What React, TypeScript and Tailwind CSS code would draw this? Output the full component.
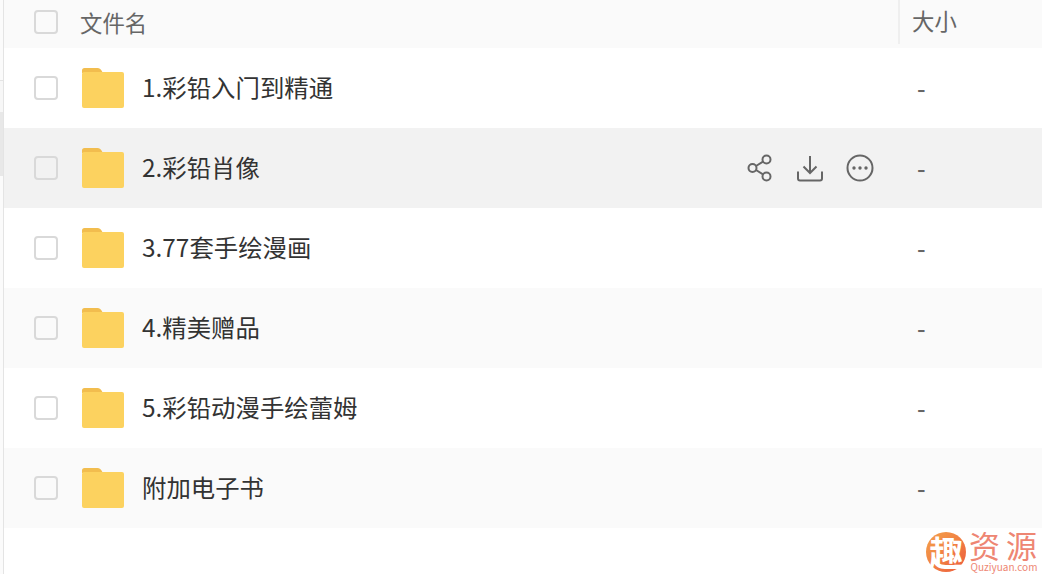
const files = [
  { name: '1.彩铅入门到精通', bg: 'bg-white' },
  { name: '2.彩铅肖像', bg: 'bg-[#f2f2f2]', hover: true },
  { name: '3.77套手绘漫画', bg: 'bg-white' },
  { name: '4.精美赠品', bg: 'bg-[#fafafa]' },
  { name: '5.彩铅动漫手绘蕾姆', bg: 'bg-white' },
  { name: '附加电子书', bg: 'bg-[#fafafa]' },
];

function Checkbox() {
  return <span className="block h-6 w-6 shrink-0 rounded-[4px] border-2 border-[#d9d9d9]" />;
}

function FolderIcon() {
  return (
    <svg width="44" height="42" viewBox="0 0 44 42" className="shrink-0">
      <path d="M1 3.5A2.5 2.5 0 0 1 3.5 1h13c2 0 3 1 4 2.5l1.500 2.500H1z" fill="#f2bd4e" />
      <path d="M1 7a2 2 0 0 1 2-2h38a2 2 0 0 1 2 2v32a2 2 0 0 1-2 2H3a2 2 0 0 1-2-2z" fill="#fcd25f" />
    </svg>
  );
}

function RowActions() {
  return (
    <div className="mr-6 flex items-center gap-[22px] text-[#666]">
      <svg width="28" height="28" viewBox="0 0 28 28" fill="none" stroke="currentColor" strokeWidth="2">
        <circle cx="6.500" cy="14" r="4" />
        <circle cx="20.500" cy="5.500" r="4" />
        <circle cx="20.500" cy="22.500" r="4" />
        <path d="M10 12l7-4.300M10 16l7 4.300" />
      </svg>
      <svg width="28" height="28" viewBox="0 0 28 28" fill="none" stroke="currentColor" strokeWidth="2">
        <path d="M14 2v17M7.500 12.500l6.500 6.500 6.500-6.500" />
        <path d="M2 17.500v7a2 2 0 0 0 2 2h20a2 2 0 0 0 2-2v-7" />
      </svg>
      <svg width="28" height="28" viewBox="0 0 28 28" fill="none" stroke="currentColor" strokeWidth="2">
        <circle cx="14" cy="14" r="12.500" />
        <circle cx="8" cy="14" r="1.700" fill="currentColor" stroke="none" />
        <circle cx="14" cy="14" r="1.700" fill="currentColor" stroke="none" />
        <circle cx="20" cy="14" r="1.700" fill="currentColor" stroke="none" />
      </svg>
    </div>
  );
}

function Watermark() {
  return (
    <div className="absolute bottom-0 left-[926px] flex items-center gap-[3px]">
      <div className="flex h-10 w-10 items-center justify-center rounded-full bg-gradient-to-br from-[#f3a24a] to-[#ec5a3c] text-[34px] font-bold leading-none text-white">
        趣
      </div>
      <div className="flex w-[70px] flex-col items-center pb-[2px]">
        <span className="ml-[4px] whitespace-nowrap text-[31px] leading-[32px] tracking-[6px] text-[#ee8673]">资源</span>
        <span className="whitespace-nowrap text-[10px] leading-[11px] text-[#ee8673]">Quziyuan.com</span>
      </div>
    </div>
  );
}

export default function App() {
  return (
    <div
      className="relative flex h-[574px] w-[1042px] overflow-hidden bg-white"
      style={{ fontFamily: '"Noto Sans CJK SC", "Liberation Sans", sans-serif' }}
    >
      <div className="flex w-1 shrink-0 flex-col border-r border-[#e4e4e4]">
        <div className="h-[81px] border-b border-[#e4e4e4] bg-[#fbfbfb]" />
        <div className="h-[31px] bg-[#f7f7f7]" />
        <div className="h-16 bg-[#e8e8e8]" />
        <div className="flex-1 bg-[#fbfbfb]" />
      </div>
      <div className="min-w-0 flex-1">
        <div className="flex h-12 items-center bg-[#fafafa] pb-1 text-[22.4px] text-[#666]">
          <div className="flex w-[76px] justify-end pr-[22px]">
            <Checkbox />
          </div>
          <span className="flex-1 leading-none">文件名</span>
          <div className="flex h-11 w-[144px] items-center self-start border-l-2 border-[#efefef] pb-[3px] pl-[12px]">大小</div>
        </div>
        {files.map((file) => (
          <div key={file.name} className={`flex h-20 items-center ${file.bg}`}>
            <div className="flex w-[54px] justify-end">
              <Checkbox />
            </div>
            <div className="ml-[23px]">
              <FolderIcon />
            </div>
            <span className="ml-[17px] flex-1 pb-[2px] text-[24.4px] leading-none text-[#333]">{file.name}</span>
            {file.hover && <RowActions />}
            <div className="w-[144px] pl-[19px] text-[24px] font-medium leading-none text-[#666]">-</div>
          </div>
        ))}
      </div>
      <Watermark />
    </div>
  );
}
